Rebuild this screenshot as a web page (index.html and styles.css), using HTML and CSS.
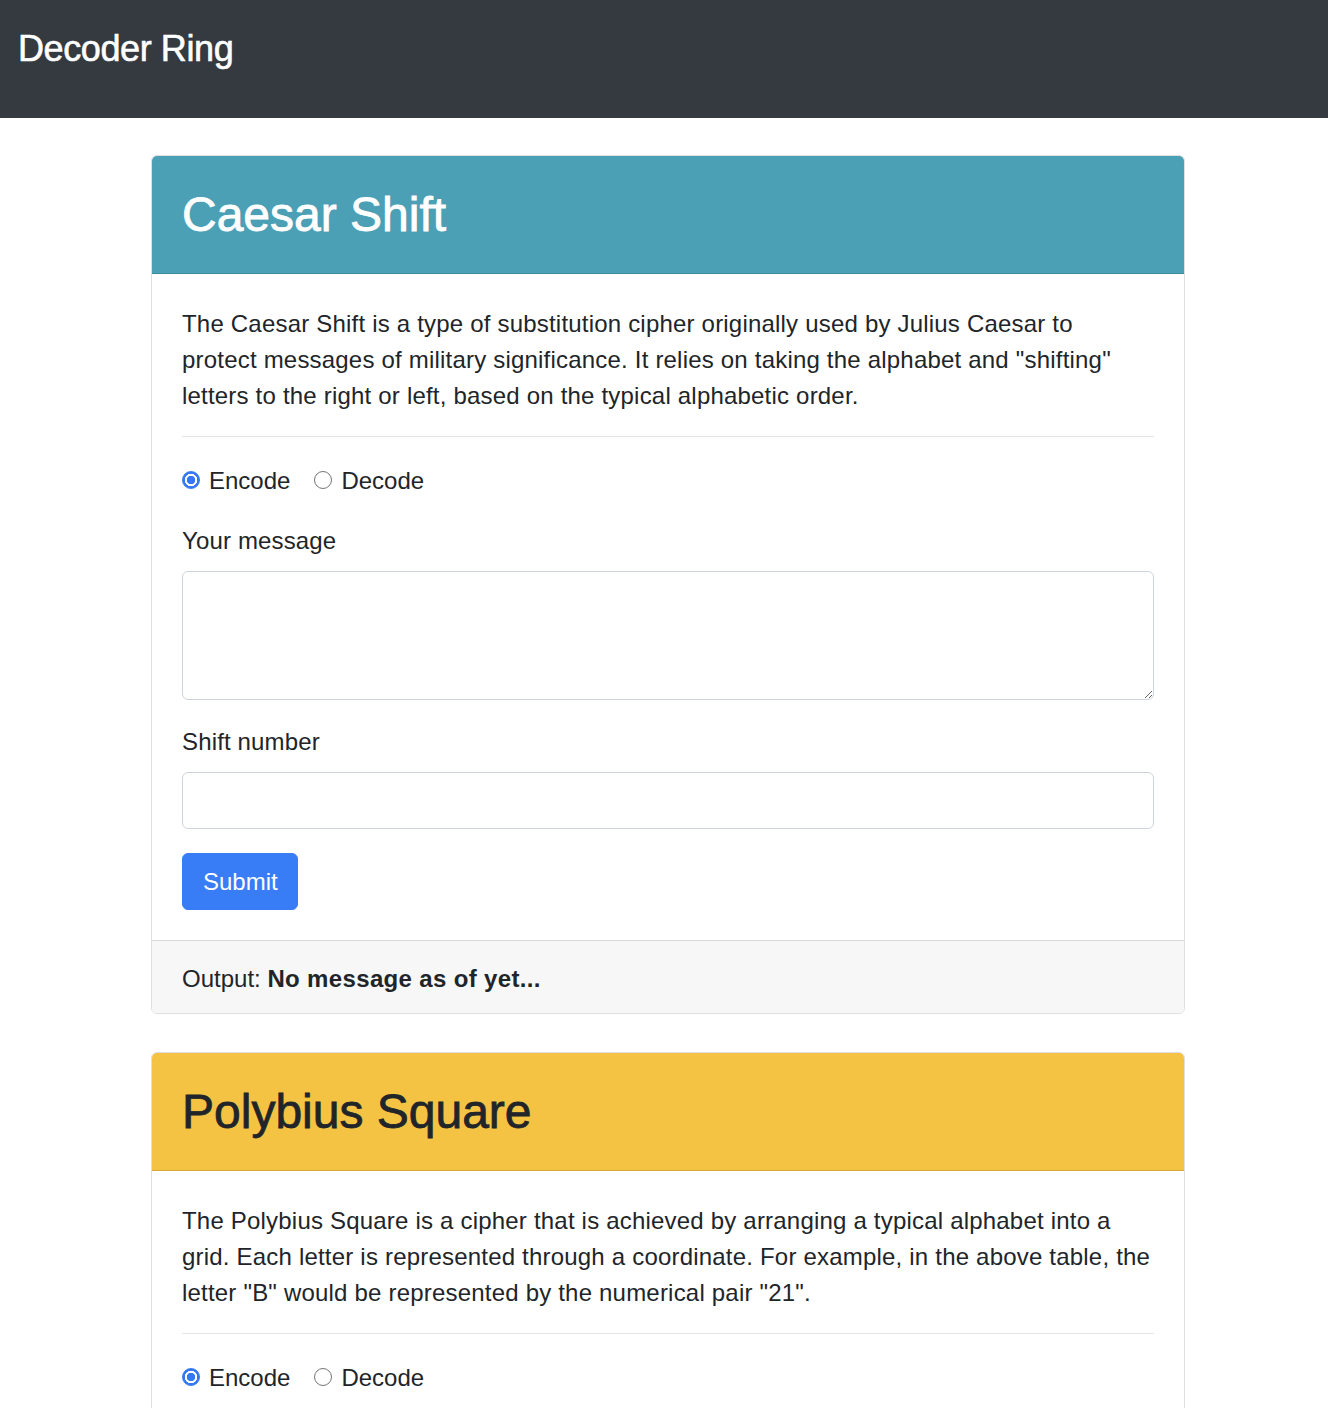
FILE: index.html
```html
<!DOCTYPE html>
<html lang="en">
<head>
<meta charset="utf-8">
<title>Decoder Ring</title>
<link rel="stylesheet" href="styles.css">
</head>
<body>
<nav class="navbar">
  <h1 class="brand">Decoder Ring</h1>
</nav>
<main class="container">
  <section class="card">
    <div class="card-header header-info"><h2 class="card-title">Caesar Shift</h2></div>
    <div class="card-body">
      <p class="intro">The Caesar Shift is a type of substitution cipher originally used by Julius Caesar to<br>protect messages of military significance. It relies on taking the alphabet and "shifting"<br>letters to the right or left, based on the typical alphabetic order.</p>
      <hr class="divider">
      <form class="cipher-form">
        <div class="radio-row">
          <label class="radio"><input type="radio" name="caesar-mode" checked><span>Encode</span></label>
          <label class="radio"><input type="radio" name="caesar-mode"><span>Decode</span></label>
        </div>
        <div class="form-group">
          <label class="field-label">Your message</label>
          <textarea class="control textarea" rows="3"></textarea>
        </div>
        <div class="form-group">
          <label class="field-label">Shift number</label>
          <input class="control input" type="number">
        </div>
        <button type="button" class="btn">Submit</button>
      </form>
    </div>
    <div class="card-footer">Output: <strong>No message as of yet...</strong></div>
  </section>

  <section class="card">
    <div class="card-header header-warning"><h2 class="card-title dark">Polybius Square</h2></div>
    <div class="card-body">
      <p class="intro">The Polybius Square is a cipher that is achieved by arranging a typical alphabet into a<br>grid. Each letter is represented through a coordinate. For example, in the above table, the<br>letter "B" would be represented by the numerical pair "21".</p>
      <hr class="divider">
      <form class="cipher-form">
        <div class="radio-row">
          <label class="radio"><input type="radio" name="poly-mode" checked><span>Encode</span></label>
          <label class="radio"><input type="radio" name="poly-mode"><span>Decode</span></label>
        </div>
        <div class="form-group">
          <label class="field-label">Your message</label>
          <textarea class="control textarea" rows="3"></textarea>
        </div>
        <button type="button" class="btn">Submit</button>
      </form>
    </div>
    <div class="card-footer">Output: <strong>No message as of yet...</strong></div>
  </section>
</main>
</body>
</html>
```

FILE: styles.css
```css
* { box-sizing: border-box; }
html, body { margin: 0; padding: 0; }
body {
  font-family: "Liberation Sans", Arial, sans-serif;
  font-size: 24px;
  line-height: 36px;
  color: #212529;
  background: #fff;
}
.navbar {
  background: #343a40;
  height: 118px;
  padding: 22px 18px 0;
}
.brand {
  margin: 0;
  color: #fff;
  font-size: 36px;
  line-height: 54px;
  font-weight: normal;
  letter-spacing: -0.4px;
  -webkit-text-stroke: 0.6px #fff;
}
.container {
  width: 1034px;
  margin-left: calc(50% - 513px);
  padding-top: 37px;
}
.card {
  border: 1px solid #dfdfdf;
  border-radius: 6px;
  overflow: hidden;
  margin-bottom: 38px;
  background: #fff;
}
.card-header {
  padding: 30px 30px 29px;
  border-bottom: 1px solid rgba(0,0,0,0.12);
}
.header-info { background: #4ba0b6; }
.header-warning { background: #f5c344; }
.card-title {
  margin: 0;
  font-size: 48px;
  line-height: 58px;
  font-weight: normal;
  color: #fff;
  -webkit-text-stroke: 0.8px #fff;
}
.card-title.dark { color: #212529; -webkit-text-stroke: 0.8px #212529; }
.card-body { padding: 32px 30px 30px; }
.intro { margin: 0 0 22px; white-space: nowrap; letter-spacing: 0.2px; }
.divider {
  border: 0;
  border-top: 1px solid rgba(0,0,0,0.1);
  margin: 0 0 26px;
}
.radio-row {
  display: flex;
  gap: 24px;
  margin-bottom: 24px;
}
.radio {
  display: flex;
  align-items: center;
  gap: 9px;
}
.radio input {
  appearance: none;
  -webkit-appearance: none;
  width: 18px;
  height: 18px;
  margin: 0;
  border-radius: 50%;
  border: 1px solid #767676;
  background: #fff;
  position: relative;
  top: -1px;
}
.radio input:checked {
  border: 1px solid #3478f6;
  background: radial-gradient(circle, #3478f6 0 4px, #fff 4.5px 6px, #3478f6 6.5px);
}
.form-group { margin-bottom: 24px; }
.field-label {
  display: block;
  margin-bottom: 12px;
  letter-spacing: 0.15px;
}
.control {
  display: block;
  width: 100%;
  border: 1px solid #ced4da;
  border-radius: 6px;
  font: inherit;
  color: inherit;
  background: #fff;
  padding: 9px 18px;
}
.textarea { height: 129px; resize: vertical; }
.input { height: 57px; }
.btn {
  display: inline-block;
  font: inherit;
  color: #fff;
  background: #387cf6;
  border: 1px solid #387cf6;
  border-radius: 6px;
  padding: 9px 19px 9px 20px;
  height: 57px;
  cursor: pointer;
}
.card-footer {
  background: #f7f7f7;
  border-top: 1px solid rgba(0,0,0,0.12);
  padding: 20px 30px 16px;
}
.card-footer strong { font-weight: bold; letter-spacing: 0.35px; }
```
